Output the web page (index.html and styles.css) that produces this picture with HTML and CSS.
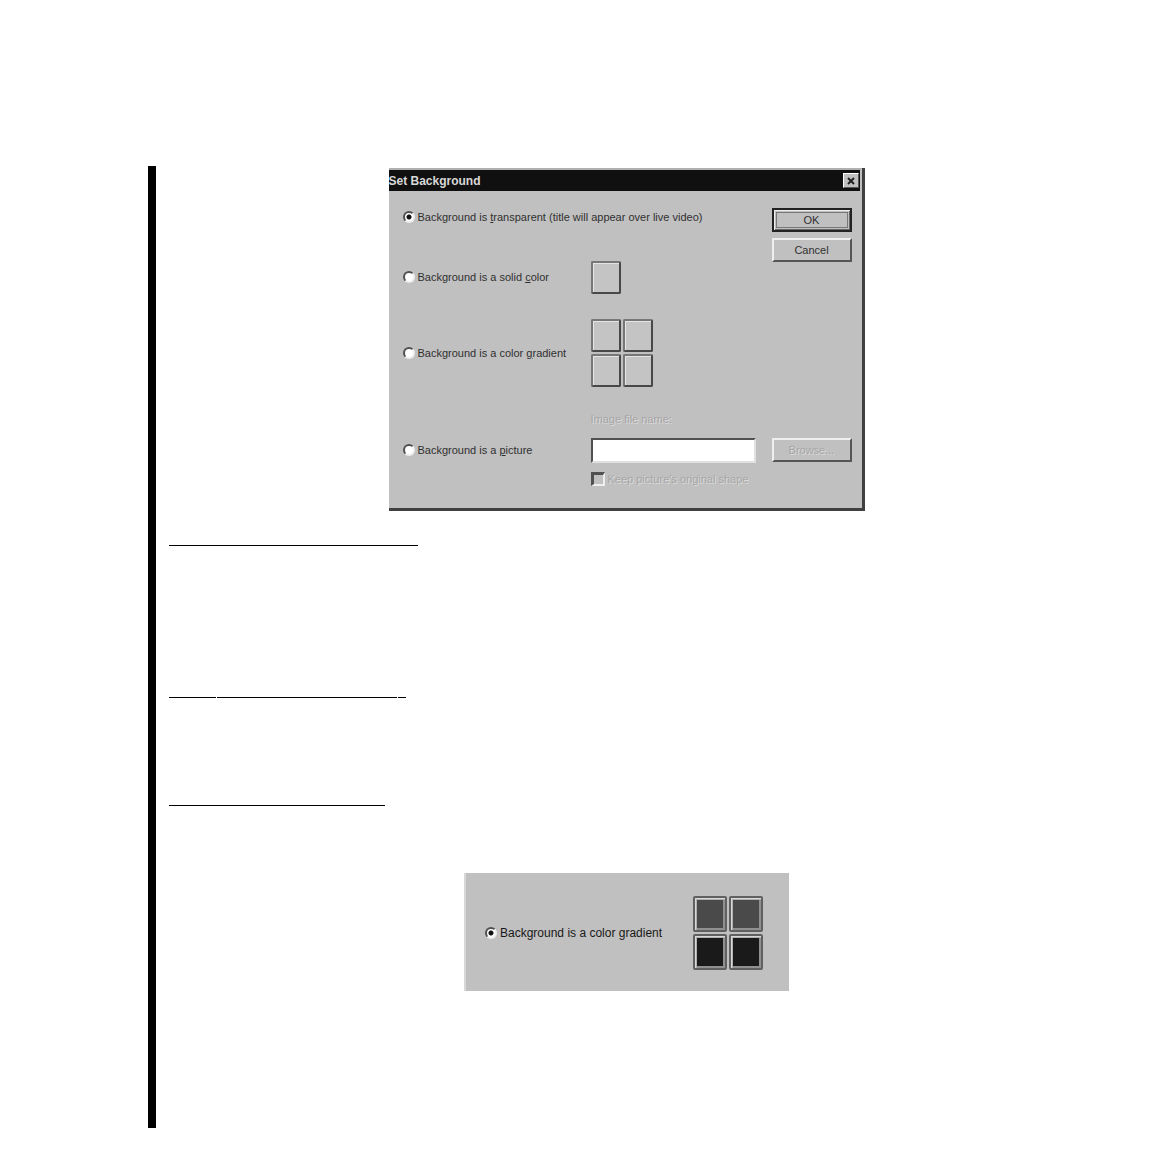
FILE: index.html
```html
<!DOCTYPE html>
<html lang="en">
<head>
    <meta charset="utf-8">
    <title>Set Background</title>
    <link rel="stylesheet" href="styles.css">
</head>
<body>
    <main class="page">
        <form class="dialog">
            <header class="title-bar">
                <h1>Set Background</h1>
                <button type="button" class="close" aria-label="Close">
                    <svg width="8" height="8" viewBox="0 0 8 8"><path d="M1 1L7 7M7 1L1 7" stroke="#222" stroke-width="2"/></svg>
                </button>
            </header>
            <div class="dialog-body">
                <label class="option wide"><input type="radio" name="background" checked><span>Background is <u>t</u>ransparent (title will appear over live video)</span></label>
                <div class="actions">
                    <button type="button" class="button default"><span>OK</span></button>
                    <button type="button" class="button">Cancel</button>
                </div>

                <label class="option"><input type="radio" name="background"><span>Background is a solid <u>c</u>olor</span></label>
                <div class="swatches">
                    <button type="button" class="swatch" aria-label="Solid color"></button>
                </div>

                <label class="option"><input type="radio" name="background"><span>Background is a color <u>g</u>radient</span></label>
                <div class="swatches">
                    <button type="button" class="swatch" aria-label="Top left color"></button>
                    <button type="button" class="swatch" aria-label="Top right color"></button>
                    <button type="button" class="swatch" aria-label="Bottom left color"></button>
                    <button type="button" class="swatch" aria-label="Bottom right color"></button>
                </div>

                <label class="file-label disabled" for="file-name">Image file name:</label>
                <label class="option"><input type="radio" name="background"><span>Background is a <u>p</u>icture</span></label>
                <input type="text" id="file-name" class="file-name" disabled>
                <button type="button" class="button browse disabled" disabled>Browse...</button>
                <label class="option check disabled"><input type="checkbox" disabled><span>Keep picture's original shape</span></label>
            </div>
        </form>

        <hr class="rule first">
        <div class="rule-row">
            <hr class="rule short">
            <hr class="rule long">
            <hr class="rule end">
        </div>
        <hr class="rule last">

        <form class="sample">
            <label class="option"><input type="radio" name="sample" checked><span>Background is a color gradient</span></label>
            <div class="swatches">
                <button type="button" class="swatch gray" aria-label="Top left color"></button>
                <button type="button" class="swatch gray" aria-label="Top right color"></button>
                <button type="button" class="swatch black" aria-label="Bottom left color"></button>
                <button type="button" class="swatch black" aria-label="Bottom right color"></button>
            </div>
        </form>
    </main>
</body>
</html>
```
FILE: styles.css
```css
* {
    box-sizing: border-box;
}

body {
    margin: 0;
    background-color: #fff;
    color: #303030;
    font-family: "Liberation Sans", Arial, sans-serif;
    font-size: 11px;
    line-height: 14px;
}

button,
input {
    margin: 0;
    padding: 0;
    font: inherit;
    color: inherit;
}

/* Page column with the thick bar on the left */
.page {
    margin: 166px 68px 24px 148px;
    padding: 2px 0 137px 13px;
    border-left: 8px solid #000;
}

/* Dialog window */
.dialog {
    width: 476px;
    max-width: 100%;
    margin: 0 auto;
    background-color: #c0c0c0;
    border: solid #404040;
    border-width: 0 3px 3px 0;
}

.title-bar {
    display: flex;
    align-items: center;
    justify-content: space-between;
    height: 23px;
    padding-right: 1px;
    background-color: #101010;
    border-top: 2px solid #b0b0b0;
    border-right: 2px solid #c0c0c0;
}

.title-bar h1 {
    margin: 0;
    color: #d8d8d8;
    font-size: 12px;
}

.close {
    display: flex;
    align-items: center;
    justify-content: center;
    width: 16px;
    height: 15px;
    background-color: #c0c0c0;
    border: 1px solid;
    border-color: #fff #555 #555 #fff;
}

.dialog-body {
    display: grid;
    grid-template-columns: 188px 1fr 80px;
    grid-template-rows: 52px 68px 84px 42px 26px 32px;
    align-items: center;
    padding: 0 10px 13px 14px;
}

/* Radio and checkbox rows */
.option {
    display: flex;
    align-items: center;
    gap: 3px;
    grid-column: 1;
    white-space: nowrap;
}

.wide {
    grid-column: 1 / 3;
}

.option input {
    flex: none;
    appearance: none;
    width: 12px;
    height: 12px;
    background-color: #fff;
    border: 2px solid;
    border-color: #505050 #eee #eee #505050;
}

.option input[type="radio"] {
    border-radius: 50%;
}

.option input[type="radio"]:checked {
    background-image: radial-gradient(circle, #111 2px, transparent 3px);
}

.option input[type="checkbox"] {
    width: 14px;
    height: 14px;
    background-color: #c0c0c0;
    border-width: 3px 2px 2px 3px;
}

.check {
    grid-column: 2 / 4;
}

/* Push buttons */
.actions {
    grid-column: 3;
    grid-row: 1 / 3;
    align-self: start;
    display: grid;
    gap: 6px;
    padding-top: 17px;
}

.button {
    width: 100%;
    height: 24px;
    background-color: #c0c0c0;
    border: 2px solid;
    border-color: #eee #555 #555 #eee;
}

.default {
    padding: 2px;
    border-color: #222;
    box-shadow: inset 1px 1px #eee, inset -1px -1px #666;
}

.default span {
    display: block;
    border: 1px solid #777;
}

.browse {
    grid-column: 3;
}

/* Color swatches */
.swatches {
    grid-column: 2;
    display: grid;
    grid-template-columns: 30px 30px;
    gap: 2px;
}

.swatch {
    height: 33px;
    background-color: #c4c4c4;
    border: 2px solid;
    border-color: #777 #484848 #484848 #777;
    border-radius: 2px;
    box-shadow: inset 1px 1px #e4e4e4;
}

/* Picture file fields */
.file-label {
    grid-column: 2 / 4;
    align-self: end;
    padding-bottom: 11px;
}

.file-name {
    width: 165px;
    height: 25px;
    background-color: #fff;
    border: 2px solid;
    border-color: #505050 #e0e0e0 #e0e0e0 #505050;
}

.disabled {
    color: #a6a6a6;
    text-shadow: 1px 1px #dcdcdc;
}

/* Heading rules */
.rule {
    height: 1px;
    margin: 0;
    background-color: #000;
    border: 0;
}

.first {
    width: 249px;
    margin-top: 34px;
}

.rule-row {
    display: flex;
    gap: 1px;
    margin-top: 151px;
}

.short {
    width: 47px;
}

.long {
    width: 180px;
}

.end {
    width: 8px;
}

.last {
    width: 216px;
    margin-top: 107px;
}

/* Gradient sample */
.sample {
    display: flex;
    align-items: center;
    justify-content: space-between;
    width: 325px;
    max-width: 100%;
    height: 118px;
    margin: 67px auto 0;
    padding: 2px 26px 0 19px;
    background-color: #c0c0c0;
    border-left: 2px solid #d8d8d8;
    color: #181818;
    font-size: 12px;
}

.sample .swatches {
    grid-template-columns: 34px 34px;
}

.sample .swatch {
    height: 36px;
    border-color: #606060;
    box-shadow: inset 1px 1px #d8d8d8, inset 2px 2px #b0b0b0, inset -2px -2px #909090;
}

.sample .gray {
    background-color: #4a4a4a;
}

.sample .black {
    background-color: #1a1a1a;
}
```
